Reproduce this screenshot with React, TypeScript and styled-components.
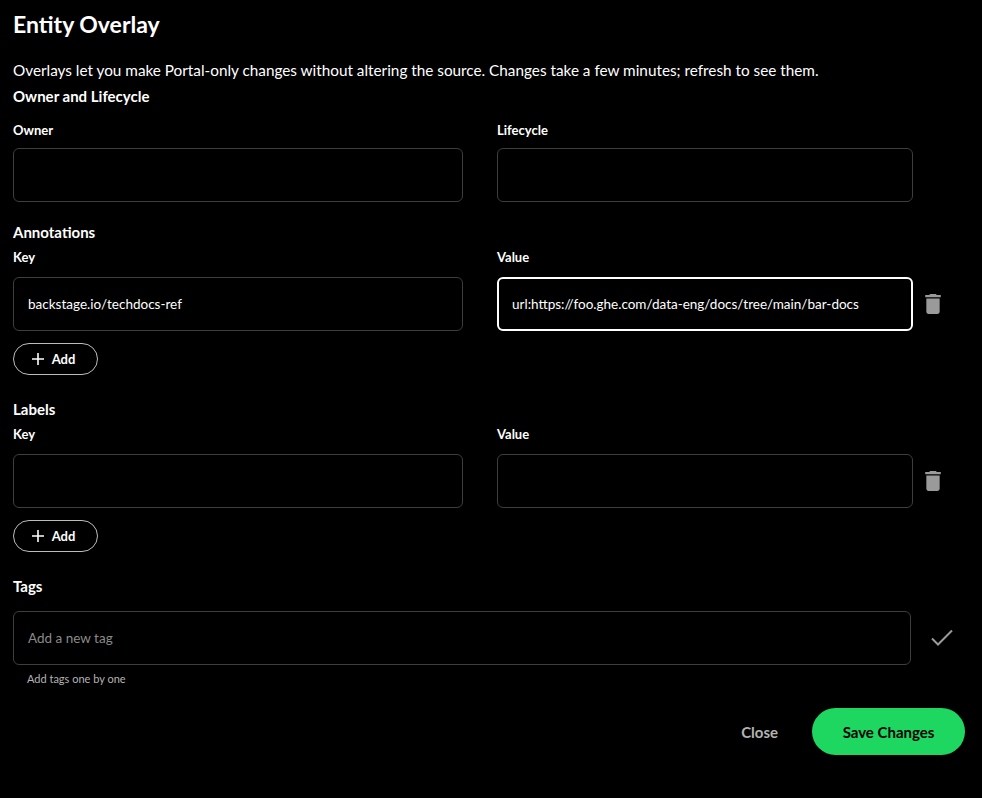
import React from "react";
import styled, { createGlobalStyle } from "styled-components";

const Global = createGlobalStyle`
  html, body { margin: 0; background: #000; }
  body { font-family: "Lato", "Noto Sans", sans-serif; color: #fff; }
  * { box-sizing: border-box; }
`;

const Page = styled.div`
  padding: 8px 13px 0 13px;
  width: 982px;
  height: 798px;
  background: #000;
`;
const Title = styled.h1`
  margin: 0;
  font-size: 23px;
  font-weight: 700;
  line-height: 32px;
`;
const Desc = styled.p`
  margin: 20px 0 0;
  font-size: 15.3px;
  line-height: 20px;
`;
const Section = styled.h2<{ $top: number }>`
  margin: ${(p) => p.$top}px 0 0;
  font-size: 15px;
  font-weight: 700;
  line-height: 20px;
`;
const Row = styled.div<{ $top: number }>`
  display: grid;
  grid-template-columns: 450px 416px 52px;
  column-gap: 34px;
  margin-top: ${(p) => p.$top}px;
  align-items: end;
`;
const Field = styled.div`
  display: flex;
  flex-direction: column;
`;
const Label = styled.label<{ $gap: number }>`
  font-size: 13px;
  font-weight: 700;
  line-height: 16px;
  margin-bottom: ${(p) => p.$gap}px;
`;
const Input = styled.div<{ $focus?: boolean; $placeholder?: boolean }>`
  height: 54px;
  border: ${(p) => (p.$focus ? "2px solid #fff" : "1px solid #3e3e3e")};
  border-radius: 6px;
  display: flex;
  align-items: center;
  padding: 0 ${(p) => (p.$focus ? 13 : 14)}px;
  font-size: 13.5px;
  color: ${(p) => (p.$placeholder ? "#8a8a8a" : "#fff")};
`;
const IconCell = styled.div`
  height: 54px;
  display: flex;
  align-items: center;
  padding-left: 7px;
  margin-left: -30px;
`;
const AddButton = styled.button`
  margin-top: 12px;
  width: 85px;
  height: 32px;
  border: 1px solid #bdbdbd;
  border-radius: 16px;
  background: transparent;
  color: #fff;
  font-family: inherit;
  font-size: 13px;
  font-weight: 700;
  display: flex;
  align-items: center;
  justify-content: center;
  gap: 8px;
  padding: 0 4px 0 0;
`;
const TagRow = styled.div`
  display: flex;
  align-items: center;
  gap: 20px;
  margin-top: 15px;
`;
const TagInput = styled(Input)`
  width: 898px;
`;
const Helper = styled.div`
  font-size: 11px;
  color: #b3b3b3;
  margin: 7px 0 0 14px;
`;
const Footer = styled.div`
  display: flex;
  justify-content: flex-end;
  align-items: center;
  gap: 28px;
  margin-top: 23px;
  padding-right: 4px;
`;
const Ghost = styled.button`
  background: none;
  border: none;
  color: #b3b3b3;
  font-family: inherit;
  font-size: 15px;
  font-weight: 700;
`;
const Primary = styled.button`
  background: #1ed760;
  border: none;
  border-radius: 24px;
  width: 153px;
  height: 47px;
  color: #000;
  font-family: inherit;
  font-size: 15px;
  font-weight: 700;
`;

const Trash = () => (
  <svg width="18" height="20" viewBox="0 0 14 18" fill="#9a9a9a">
    <path d="M1 16c0 1.1.9 2 2 2h8c1.1 0 2-.9 2-2V4H1v12zM14 1h-3.5l-1-1h-5l-1 1H0v2h14V1z" />
  </svg>
);
const Plus = () => (
  <svg width="12" height="12" viewBox="0 0 12 12" stroke="#fff" strokeWidth="1.6">
    <path d="M6 0v12M0 6h12" />
  </svg>
);
const Check = () => (
  <svg width="22" height="18" viewBox="0 0 22 18" fill="none" stroke="#9a9a9a" strokeWidth="2">
    <path d="M1 9.5l6 6L21 1.5" />
  </svg>
);

export default function App() {
  return (
    <Page>
      <Global />
      <Title>Entity Overlay</Title>
      <Desc>
        Overlays let you make Portal-only changes without altering the source. Changes take a few minutes; refresh to see them.
      </Desc>
      <Section $top={6}>Owner and Lifecycle</Section>
      <Row $top={16}>
        <Field>
          <Label $gap={10}>Owner</Label>
          <Input />
        </Field>
        <Field>
          <Label $gap={10}>Lifecycle</Label>
          <Input />
        </Field>
      </Row>
      <Section $top={20}>Annotations</Section>
      <Row $top={7}>
        <Field>
          <Label $gap={12}>Key</Label>
          <Input>backstage.io/techdocs-ref</Input>
        </Field>
        <Field>
          <Label $gap={12}>Value</Label>
          <Input $focus>url:https://foo.ghe.com/data-eng/docs/tree/main/bar-docs</Input>
        </Field>
        <IconCell>
          <Trash />
        </IconCell>
      </Row>
      <AddButton>
        <Plus /> Add
      </AddButton>
      <Section $top={24}>Labels</Section>
      <Row $top={7}>
        <Field>
          <Label $gap={12}>Key</Label>
          <Input />
        </Field>
        <Field>
          <Label $gap={12}>Value</Label>
          <Input />
        </Field>
        <IconCell>
          <Trash />
        </IconCell>
      </Row>
      <AddButton>
        <Plus /> Add
      </AddButton>
      <Section $top={24}>Tags</Section>
      <TagRow>
        <TagInput $placeholder>Add a new tag</TagInput>
        <Check />
      </TagRow>
      <Helper>Add tags one by one</Helper>
      <Footer>
        <Ghost>Close</Ghost>
        <Primary>Save Changes</Primary>
      </Footer>
    </Page>
  );
}
